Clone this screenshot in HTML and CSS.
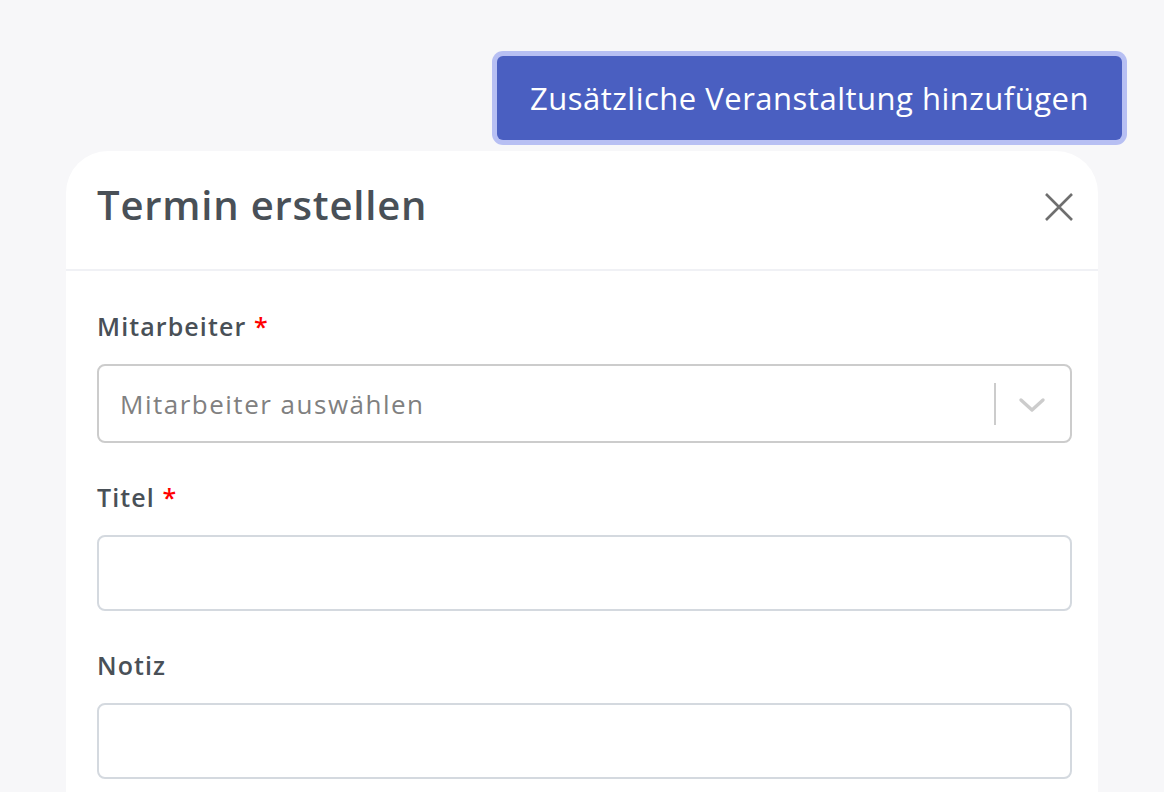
FILE: index.html
```html
<!DOCTYPE html>
<html lang="de">
<head>
    <meta charset="UTF-8">
    <meta name="viewport" content="width=device-width, initial-scale=1.0">
    <title>Termin erstellen</title>
    <link rel="stylesheet" href="styles.css">
</head>
<body>
    <div class="toolbar">
        <button class="btn-primary" type="button">Zusätzliche Veranstaltung hinzufügen</button>
    </div>

    <!-- Dialog: Termin erstellen -->
    <div class="modal">
        <div class="modal-header">
            <h2 class="modal-title">Termin erstellen</h2>
            <button class="modal-close" type="button" aria-label="Schließen">
                <svg width="30" height="30" viewBox="0 0 30 30">
                    <path d="M2 2 L28 28 M28 2 L2 28" stroke="#6f6f6f" stroke-width="2.6" fill="none"/>
                </svg>
            </button>
        </div>
        <div class="modal-body">
            <div class="field">
                <label class="field-label">Mitarbeiter <span class="req">*</span></label>
                <div class="select">
                    <div class="select-value">Mitarbeiter auswählen</div>
                    <span class="select-sep"></span>
                    <span class="select-arrow">
                        <svg width="28" height="16" viewBox="0 0 28 16">
                            <path d="M3 3 L14 13 L25 3" stroke="#cccccc" stroke-width="3.4" fill="none" stroke-linecap="round" stroke-linejoin="round"/>
                        </svg>
                    </span>
                </div>
            </div>
            <div class="field">
                <label class="field-label">Titel <span class="req">*</span></label>
                <input class="input" type="text">
            </div>
            <div class="field">
                <label class="field-label">Notiz</label>
                <input class="input" type="text">
            </div>
        </div>
    </div>
</body>
</html>
```

FILE: styles.css
```css
body, html {
    margin: 0;
    padding: 0;
    height: 100%;
    font-family: 'Open Sans', sans-serif;
    background-color: #f7f7f9;
    overflow: hidden;
}
.toolbar {
    display: flex;
    justify-content: flex-end;
    padding: 56px 42px 0 0;
}
.btn-primary {
    width: 625px;
    height: 84px;
    border: none;
    border-radius: 6px;
    background-color: #4a5fc1;
    color: #fff;
    font-family: inherit;
    font-size: 31px;
    letter-spacing: 0.5px;
    box-shadow: 0 0 0 5px #b7bff3;
    cursor: pointer;
}
.modal {
    margin: 11px 0 0 66px;
    width: 1032px;
    min-height: 700px;
    background: #fff;
    border-radius: 42px 42px 0 0;
}
.modal-header {
    height: 120px;
    display: flex;
    align-items: center;
    justify-content: space-between;
    padding: 0 24px 12px 31px;
    border-bottom: 2px solid #f0f1f5;
    box-sizing: border-box;
}
.modal-title {
    margin: 0;
    font-size: 40px;
    font-weight: 600;
    color: #495057;
    letter-spacing: 0.8px;
}
.modal-close {
    border: none;
    background: none;
    padding: 0;
    margin-top: 8px;
    cursor: pointer;
}
.modal-body {
    padding: 38px 26px 0 31px;
}
.field {
    margin-bottom: 37px;
}
.field-label {
    display: block;
    font-size: 25px;
    font-weight: 600;
    color: #495057;
    letter-spacing: 1.1px;
    margin-bottom: 21px;
}
.req {
    color: #ff0000;
}
.select {
    height: 79px;
    border: 2px solid #cccccc;
    border-radius: 8px;
    display: flex;
    align-items: center;
    box-sizing: border-box;
}
.select-value {
    flex: 1;
    padding-left: 21px;
    font-size: 26px;
    letter-spacing: 1.5px;
    color: #808080;
}
.select-sep {
    width: 2px;
    height: 42px;
    background: #cccccc;
}
.select-arrow {
    display: flex;
    padding: 2px 24px 0 22px;
}
.input {
    display: block;
    width: 100%;
    height: 76px;
    border: 2px solid #d4d9df;
    border-radius: 8px;
    box-sizing: border-box;
    font-family: inherit;
    font-size: 25px;
    padding: 0 20px;
}
```
